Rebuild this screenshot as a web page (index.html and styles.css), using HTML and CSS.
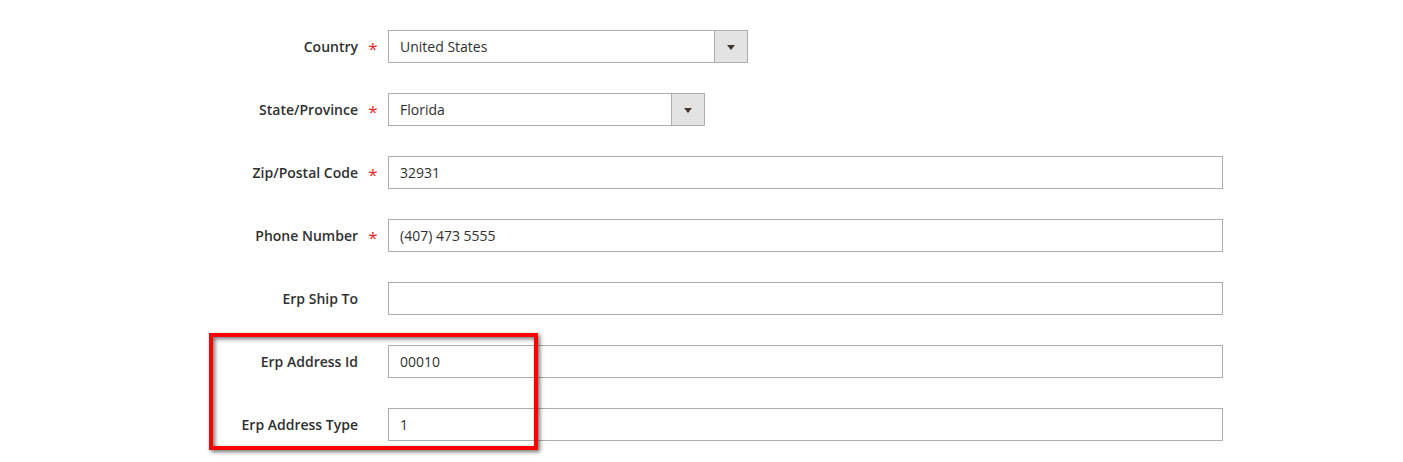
FILE: index.html
```html
<!DOCTYPE html>
<html>
<head>
<meta charset="utf-8">
<link rel="stylesheet" href="styles.css">
</head>
<body>
<div class="form">
  <div class="row">
    <label class="label">Country</label>
    <span class="req">*</span>
    <div class="select select-country">
      <span class="value">United States</span>
      <span class="btn"><span class="arrow"></span></span>
    </div>
  </div>
  <div class="row">
    <label class="label">State/Province</label>
    <span class="req">*</span>
    <div class="select select-state">
      <span class="value">Florida</span>
      <span class="btn"><span class="arrow"></span></span>
    </div>
  </div>
  <div class="row">
    <label class="label">Zip/Postal Code</label>
    <span class="req">*</span>
    <div class="input"><span class="value">32931</span></div>
  </div>
  <div class="row">
    <label class="label">Phone Number</label>
    <span class="req">*</span>
    <div class="input"><span class="value">(407) 473 5555</span></div>
  </div>
  <div class="row">
    <label class="label">Erp Ship To</label>
    <span class="req"></span>
    <div class="input"><span class="value"></span></div>
  </div>
  <div class="row">
    <label class="label">Erp Address Id</label>
    <span class="req"></span>
    <div class="input"><span class="value">00010</span></div>
  </div>
  <div class="row">
    <label class="label">Erp Address Type</label>
    <span class="req"></span>
    <div class="input"><span class="value">1</span></div>
  </div>
  <div class="highlight"></div>
</div>
</body>
</html>
```
FILE: styles.css
```css
html, body {
  margin: 0;
  padding: 0;
  background: #ffffff;
}
body {
  font-family: "Open Sans", "Liberation Sans", sans-serif;
  font-size: 14px;
  color: #303030;
}
.form {
  position: relative;
  display: flex;
  flex-direction: column;
  gap: 30px;
  padding-top: 30px;
  padding-bottom: 21px;
}
.row {
  display: grid;
  grid-template-columns: 358px 30px 835px;
  grid-template-rows: 33px;
  align-items: center;
  height: 33px;
}
.label {
  text-align: right;
  font-weight: 600;
  color: #303030;
  line-height: 20px;
}
.req {
  color: #e22626;
  font-size: 17px;
  text-align: center;
  line-height: 17px;
  height: 17px;
  margin-top: 4px;
}
.input, .select {
  box-sizing: border-box;
  height: 33px;
  border: 1px solid #adadad;
  background: #fff;
  display: flex;
  align-items: center;
}
.value {
  padding-left: 11px;
  flex: 1;
  color: #303030;
  line-height: 20px;
}
.select-country {
  width: 360px;
}
.select-state {
  width: 317px;
}
.btn {
  width: 32px;
  height: 31px;
  background: #e3e3e3;
  border-left: 1px solid #adadad;
  display: flex;
  align-items: center;
  justify-content: center;
}
.arrow {
  width: 0;
  height: 0;
  border-left: 4px solid transparent;
  border-right: 4px solid transparent;
  border-top: 5px solid #41362f;
  margin-top: 1px;
}
.highlight {
  position: absolute;
  left: 209px;
  top: 333px;
  width: 321px;
  height: 109px;
  border: 4px solid #ff0000;
  box-shadow: 2px 2px 4px rgba(0, 0, 0, 0.55), inset 2px 2px 4px rgba(0, 0, 0, 0.55);
}
```
